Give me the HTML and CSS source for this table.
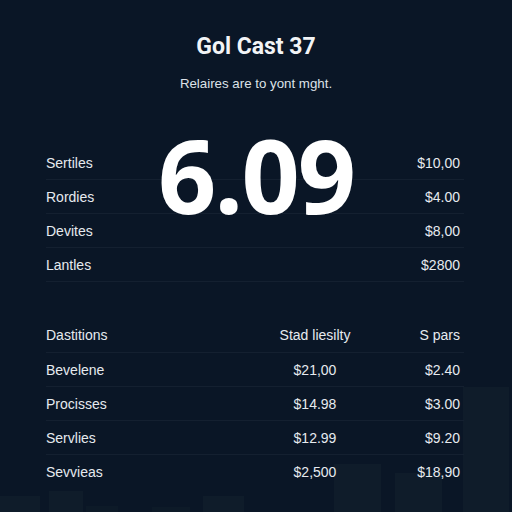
FILE: index.html
```html
<!DOCTYPE html>
<html>
<head>
<meta charset="utf-8">
<link rel="stylesheet" href="styles.css">
</head>
<body>
<div class="bg-bars">
  <div class="bar b1"></div>
  <div class="bar b2"></div>
  <div class="bar b3"></div>
  <div class="bar b4"></div>
  <div class="bar b5"></div>
  <div class="bar b6"></div>
  <div class="bar b7"></div>
  <div class="bar b8"></div>
</div>
<main class="page">
  <h1 class="title">Gol Cast 37</h1>
  <p class="subtitle">Relaires are to yont mght.</p>

  <section class="top">
    <div class="big">6.09</div>
    <div class="row"><span class="name">Sertiles</span><span class="val">$10,00</span></div>
    <div class="row"><span class="name">Rordies</span><span class="val">$4.00</span></div>
    <div class="row"><span class="name">Devites</span><span class="val">$8,00</span></div>
    <div class="row"><span class="name">Lantles</span><span class="val">$2800</span></div>
  </section>

  <section class="bottom">
    <div class="trow head"><span class="name">Dastitions</span><span class="mid">Stad liesilty</span><span class="val">S pars</span></div>
    <div class="trow"><span class="name">Bevelene</span><span class="mid">$21,00</span><span class="val">$2.40</span></div>
    <div class="trow"><span class="name">Procisses</span><span class="mid">$14.98</span><span class="val">$3.00</span></div>
    <div class="trow"><span class="name">Servlies</span><span class="mid">$12.99</span><span class="val">$9.20</span></div>
    <div class="trow last"><span class="name">Sevvieas</span><span class="mid">$2,500</span><span class="val">$18,90</span></div>
  </section>
</main>
</body>
</html>
```
FILE: styles.css
```css
html, body {
  margin: 0;
  padding: 0;
}
body {
  width: 512px;
  height: 512px;
  overflow: hidden;
  background: #0a1626;
  color: #e6eaef;
  font-family: "Liberation Sans", Arial, sans-serif;
  position: relative;
}
.bg-bars {
  position: absolute;
  inset: 0;
  z-index: 0;
}
.bar {
  position: absolute;
  bottom: 0;
  background: #0f1c2a;
}
.b1 { left: 0; width: 40px; height: 16px; }
.b2 { left: 49px; width: 34px; height: 21px; }
.b3 { left: 86px; width: 32px; height: 6px; background: #0d1a28; }
.b4 { left: 152px; width: 38px; height: 5px; background: #0d1a28; }
.b5 { left: 203px; width: 41px; height: 16px; }
.b6 { left: 334px; width: 47px; height: 48px; }
.b7 { left: 395px; width: 47px; height: 39px; }
.b8 { left: 463px; width: 46px; height: 125px; }

.page {
  position: relative;
  z-index: 1;
  padding: 32px 48px 0 46px;
}
.title {
  margin: 0;
  text-align: center;
  font-family: Roboto, "Liberation Sans", sans-serif;
  font-weight: 700;
  font-size: 23px;
  line-height: 30px;
  color: #f2f4f6;
  padding-left: 2px;
}
.subtitle {
  margin: 12px 0 0;
  text-align: center;
  font-size: 13.3px;
  line-height: 20px;
  color: #dde2e8;
  padding-left: 2px;
}
.top {
  position: relative;
  margin-top: 52px;
}
.big {
  position: absolute;
  left: 0;
  right: 0;
  top: -31px;
  text-align: center;
  font-family: "Open Sans", sans-serif;
  font-weight: 700;
  font-size: 102px;
  line-height: 120px;
  letter-spacing: -2px;
  color: #ffffff;
  padding-left: 2px;
  z-index: 2;
}
.row {
  display: flex;
  justify-content: space-between;
  align-items: center;
  height: 33px;
  border-bottom: 1px solid #142030;
  font-size: 14px;
  padding-right: 4px;
}
.bottom {
  margin-top: 36px;
}
.trow {
  display: grid;
  grid-template-columns: 1fr 100px 95px;
  align-items: center;
  height: 33px;
  border-bottom: 1px solid #142030;
  font-size: 14px;
  padding-right: 4px;
}
.trow.head {
  height: 34px;
}
.trow.last {
  border-bottom-color: transparent;
}
.mid {
  text-align: center;
}
.val {
  text-align: right;
}
```
